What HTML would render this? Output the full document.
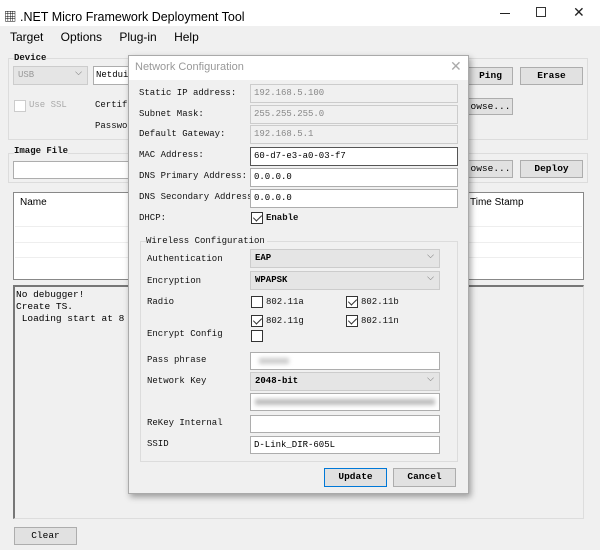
<!DOCTYPE html>
<html><head><style>
*{box-sizing:border-box;margin:0;padding:0}
body{width:600px;height:550px;background:#f0f0f0;position:relative;overflow:hidden;font-family:"Liberation Mono","Noto Sans CJK SC",monospace;font-size:9px;color:#000}
.a{position:absolute}
.ui{font-family:"Liberation Sans","Noto Sans CJK SC",sans-serif}
.box{position:absolute;background:#fff;border:1px solid #adadad}
.dis{background:#f0f0f0;border:1px solid #ccc;color:#888}
.btn{position:absolute;background:#e1e1e1;border:1px solid #adadad;text-align:center;font-size:9.5px;line-height:16px}
.grp{position:absolute;border:1px solid #dcdcdc}
.cb{position:absolute;width:12px;height:12px;border:1px solid #333;background:#fff}
.cb.c::after{content:"";position:absolute;left:3px;top:0px;width:4px;height:7px;border:solid #333;border-width:0 1.5px 1.5px 0;transform:rotate(45deg)}
.sel{position:absolute;background:#e5e5e5;border:1px solid #ccc;font-weight:bold;padding-left:4px;line-height:17px}
.sel::after{content:"⌵";position:absolute;right:5px;top:-2px;color:#666;font-weight:normal;font-family:"DejaVu Sans";font-size:9px}
.l{position:absolute;font-size:9px;color:#111}
</style></head><body>
<div class="a" style="left:0;top:0;width:600px;height:26px;background:#fff"></div>
<div class="a ui" style="left:4px;top:6px;font-size:12.5px">▦ .NET Micro Framework Deployment Tool</div>
<div class="a" style="left:500px;top:13px;width:10px;border-top:1px solid #222"></div>
<div class="a" style="left:536px;top:7px;width:10px;height:10px;border:1px solid #333"></div>
<div class="a ui" style="left:573px;top:4px;font-size:14px;color:#222">✕</div>
<div class="a ui" style="left:10px;top:30px;font-size:12px;word-spacing:14px">Target Options Plug-in Help</div>

<div class="grp" style="left:8px;top:58px;width:580px;height:82px"></div>
<div class="l" style="left:14px;top:53px;background:#f0f0f0;font-weight:bold">Device</div>
<div class="sel dis" style="left:13px;top:66px;width:75px;height:19px;font-weight:normal;color:#999">USB</div>
<div class="box" style="left:93px;top:66px;width:40px;height:19px;padding-left:2px;line-height:17px">Netdui</div>
<div class="cb" style="left:14px;top:100px;border-color:#ccc"></div>
<div class="l" style="left:29px;top:100px;color:#aaa">Use SSL</div>
<div class="l" style="left:95px;top:100px">Certif</div>
<div class="l" style="left:95px;top:121px">Passwo</div>
<div class="btn" style="left:468px;top:67px;width:45px;height:18px;font-weight:bold">Ping</div>
<div class="btn" style="left:520px;top:67px;width:63px;height:18px;font-weight:bold">Erase</div>
<div class="btn" style="left:468px;top:98px;width:45px;height:17px">owse...</div>

<div class="grp" style="left:8px;top:153px;width:580px;height:30px"></div>
<div class="l" style="left:14px;top:146px;background:#f0f0f0;font-weight:bold">Image File</div>
<div class="box" style="left:13px;top:161px;width:120px;height:18px"></div>
<div class="btn" style="left:468px;top:160px;width:45px;height:18px">owse...</div>
<div class="btn" style="left:520px;top:160px;width:63px;height:18px;font-weight:bold">Deploy</div>

<div class="box" style="left:13px;top:192px;width:571px;height:88px;border-color:#888"></div>
<div class="a ui" style="left:20px;top:197px;font-size:10px">Name</div>
<div class="a ui" style="left:470px;top:197px;font-size:10px">Time Stamp</div>
<div class="a" style="left:15px;top:226px;width:567px;border-top:1px solid #eee"></div>
<div class="a" style="left:15px;top:242px;width:567px;border-top:1px solid #eee"></div>
<div class="a" style="left:15px;top:257px;width:567px;border-top:1px solid #eee"></div>

<div class="a" style="left:13px;top:285px;width:571px;height:234px;border:1px solid #ddd;border-left:2px solid #777;border-top:2px solid #777"></div>
<div class="a" style="left:16px;top:289px;font-family:'Liberation Mono',monospace;font-size:9.5px;line-height:12px;white-space:pre">No debugger!
Create TS.
 Loading start at 8</div>
<div class="btn" style="left:14px;top:527px;width:63px;height:18px">Clear</div>

<!-- dialog -->
<div class="a" style="left:128px;top:55px;width:341px;height:439px;background:#f0f0f0;border:1px solid #aaa;box-shadow:2px 3px 6px rgba(0,0,0,.35)"></div>
<div class="a" style="left:129px;top:56px;width:339px;height:24px;background:#fff"></div>
<div class="a ui" style="left:135px;top:61px;font-size:11px;color:#999">Network Configuration</div>
<div class="a ui" style="left:450px;top:58px;font-size:14px;color:#aaa">✕</div>

<div class="l" style="left:139px;top:88px">Static IP address:</div>
<div class="box dis" style="left:250px;top:84px;width:208px;height:19px;padding-left:3px;line-height:17px">192.168.5.100</div>
<div class="l" style="left:139px;top:109px">Subnet Mask:</div>
<div class="box dis" style="left:250px;top:105px;width:208px;height:19px;padding-left:3px;line-height:17px">255.255.255.0</div>
<div class="l" style="left:139px;top:129px">Default Gateway:</div>
<div class="box dis" style="left:250px;top:125px;width:208px;height:19px;padding-left:3px;line-height:17px">192.168.5.1</div>
<div class="l" style="left:139px;top:150px">MAC Address:</div>
<div class="box" style="left:250px;top:147px;width:208px;height:19px;border:1px solid #555;padding-left:3px;line-height:17px">60-d7-e3-a0-03-f7</div>
<div class="l" style="left:139px;top:171px">DNS Primary Address:</div>
<div class="box" style="left:250px;top:168px;width:208px;height:19px;padding-left:3px;line-height:17px">0.0.0.0</div>
<div class="l" style="left:139px;top:192px">DNS Secondary Address</div>
<div class="box" style="left:250px;top:189px;width:208px;height:19px;padding-left:3px;line-height:17px">0.0.0.0</div>
<div class="l" style="left:139px;top:213px">DHCP:</div>
<div class="cb c" style="left:251px;top:212px"></div>
<div class="l" style="left:266px;top:213px;font-weight:bold">Enable</div>

<div class="grp" style="left:140px;top:241px;width:318px;height:221px"></div>
<div class="l" style="left:146px;top:236px;background:#f0f0f0;padding-right:2px">Wireless Configuration</div>
<div class="l" style="left:147px;top:254px">Authentication</div>
<div class="sel" style="left:250px;top:249px;width:190px;height:19px">EAP</div>
<div class="l" style="left:147px;top:276px">Encryption</div>
<div class="sel" style="left:250px;top:271px;width:190px;height:19px">WPAPSK</div>
<div class="l" style="left:147px;top:297px">Radio</div>
<div class="cb" style="left:251px;top:296px"></div><div class="l" style="left:266px;top:297px">802.11a</div>
<div class="cb c" style="left:346px;top:296px"></div><div class="l" style="left:361px;top:297px">802.11b</div>
<div class="cb c" style="left:251px;top:315px"></div><div class="l" style="left:266px;top:316px">802.11g</div>
<div class="cb c" style="left:346px;top:315px"></div><div class="l" style="left:361px;top:316px">802.11n</div>
<div class="l" style="left:147px;top:329px">Encrypt Config</div>
<div class="cb" style="left:251px;top:330px"></div>
<div class="l" style="left:147px;top:355px">Pass phrase</div>
<div class="box" style="left:250px;top:352px;width:190px;height:18px"><div class="a" style="left:8px;top:5px;width:30px;height:6px;background:#ccc;filter:blur(2px)"></div></div>
<div class="l" style="left:147px;top:376px">Network Key</div>
<div class="sel" style="left:250px;top:372px;width:190px;height:19px">2048-bit</div>
<div class="box" style="left:250px;top:393px;width:190px;height:18px"><div class="a" style="left:4px;top:5px;width:180px;height:6px;background:#bbb;filter:blur(2px)"></div></div>
<div class="l" style="left:147px;top:418px">ReKey Internal</div>
<div class="box" style="left:250px;top:415px;width:190px;height:18px"></div>
<div class="l" style="left:147px;top:439px">SSID</div>
<div class="box" style="left:250px;top:436px;width:190px;height:18px;padding-left:3px;line-height:16px">D-Link_DIR-605L</div>
<div class="btn" style="left:324px;top:468px;width:63px;height:19px;border:1px solid #0078d7;font-weight:bold">Update</div>
<div class="btn" style="left:393px;top:468px;width:63px;height:19px;font-weight:bold">Cancel</div>
</body></html>
